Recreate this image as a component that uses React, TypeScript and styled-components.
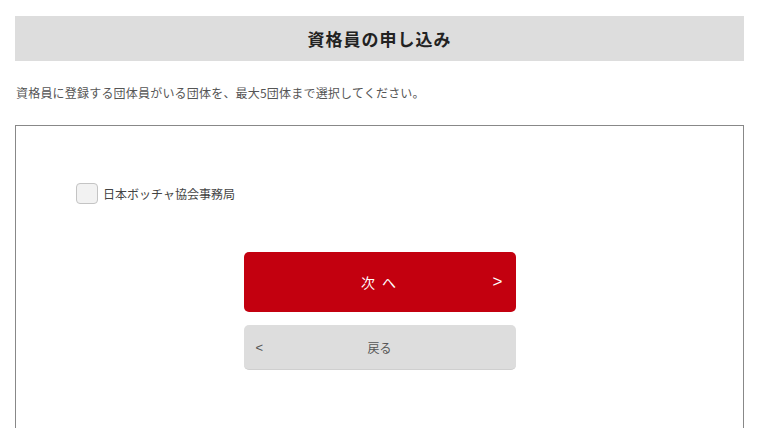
import React, { FC, useState } from 'react';
import styled, { createGlobalStyle } from 'styled-components';

const App: FC = () => {
  const [checked, setChecked] = useState(false);

  return (
    <>
      <GlobalStyle />
      <Page>
        <Header>資格員の申し込み</Header>
        <Lead>資格員に登録する団体員がいる団体を、最大5団体まで選択してください。</Lead>
        <Panel>
          <CheckRow>
            <CheckBox
              type="checkbox"
              checked={checked}
              onChange={() => setChecked(!checked)}
            />
            <CheckLabel>日本ボッチャ協会事務局</CheckLabel>
          </CheckRow>
          <Buttons>
            <NextButton>
              <span>次 へ</span>
              <Arrow side="right">&gt;</Arrow>
            </NextButton>
            <BackButton>
              <Arrow side="left">&lt;</Arrow>
              <span>戻る</span>
            </BackButton>
          </Buttons>
        </Panel>
      </Page>
    </>
  );
};

export default App;

const GlobalStyle = createGlobalStyle`
  html, body {
    margin: 0;
    padding: 0;
    background: #fff;
    font-family: "Noto Sans CJK JP", "Noto Sans", sans-serif;
  }
  * {
    box-sizing: border-box;
  }
`;

const Page = styled.div`
  width: 760px;
  height: 428px;
  overflow: hidden;
  padding: 16px 16px 0 15px;
`;

const Header = styled.h1`
  margin: 0;
  height: 45px;
  background: #dddddd;
  display: flex;
  align-items: center;
  justify-content: center;
  font-size: 17px;
  font-weight: 700;
  color: #222;
  letter-spacing: 1px;
`;

const Lead = styled.p`
  margin: 23px 0 0 1px;
  font-size: 12px;
  line-height: 18px;
  color: #555;
  letter-spacing: 0.2px;
`;

const Panel = styled.div`
  margin-top: 23px;
  border: 1px solid #888;
  height: 320px;
  padding: 57px 0 0 60px;
`;

const CheckRow = styled.label`
  display: flex;
  align-items: center;
  gap: 5px;
  cursor: pointer;
`;

const CheckBox = styled.input`
  appearance: none;
  margin: 0;
  width: 22px;
  height: 21px;
  border: 1px solid #c4c4c4;
  border-radius: 4px;
  background: #f2f2f2;
  cursor: pointer;
  &:checked {
    background: #c3000f;
    border-color: #c3000f;
  }
`;

const CheckLabel = styled.span`
  font-size: 12px;
  color: #444;
`;

const Buttons = styled.div`
  display: flex;
  flex-direction: column;
  align-items: center;
  gap: 13px;
  margin: 48px 0 0 -60px;
`;

const BaseButton = styled.button`
  position: relative;
  width: 272px;
  border: none;
  border-radius: 5px;
  display: flex;
  align-items: center;
  justify-content: center;
  font-family: inherit;
  cursor: pointer;
`;

const NextButton = styled(BaseButton)`
  height: 60px;
  background: #c3000f;
  color: #fff;
  font-size: 14px;
  letter-spacing: 2px;
`;

const BackButton = styled(BaseButton)`
  height: 45px;
  background: #dddddd;
  border-bottom: 1px solid #cfcfcf;
  color: #555;
  font-size: 12px;
`;

const Arrow = styled.span<{ side: 'left' | 'right' }>`
  position: absolute;
  top: 50%;
  transform: translateY(-50%);
  font-family: "Liberation Sans", sans-serif;
  letter-spacing: 0;
  ${({ side }) => (side === 'right' ? 'right: 13px; font-size: 17px;' : 'left: 12px; font-size: 13px;')}
`;
